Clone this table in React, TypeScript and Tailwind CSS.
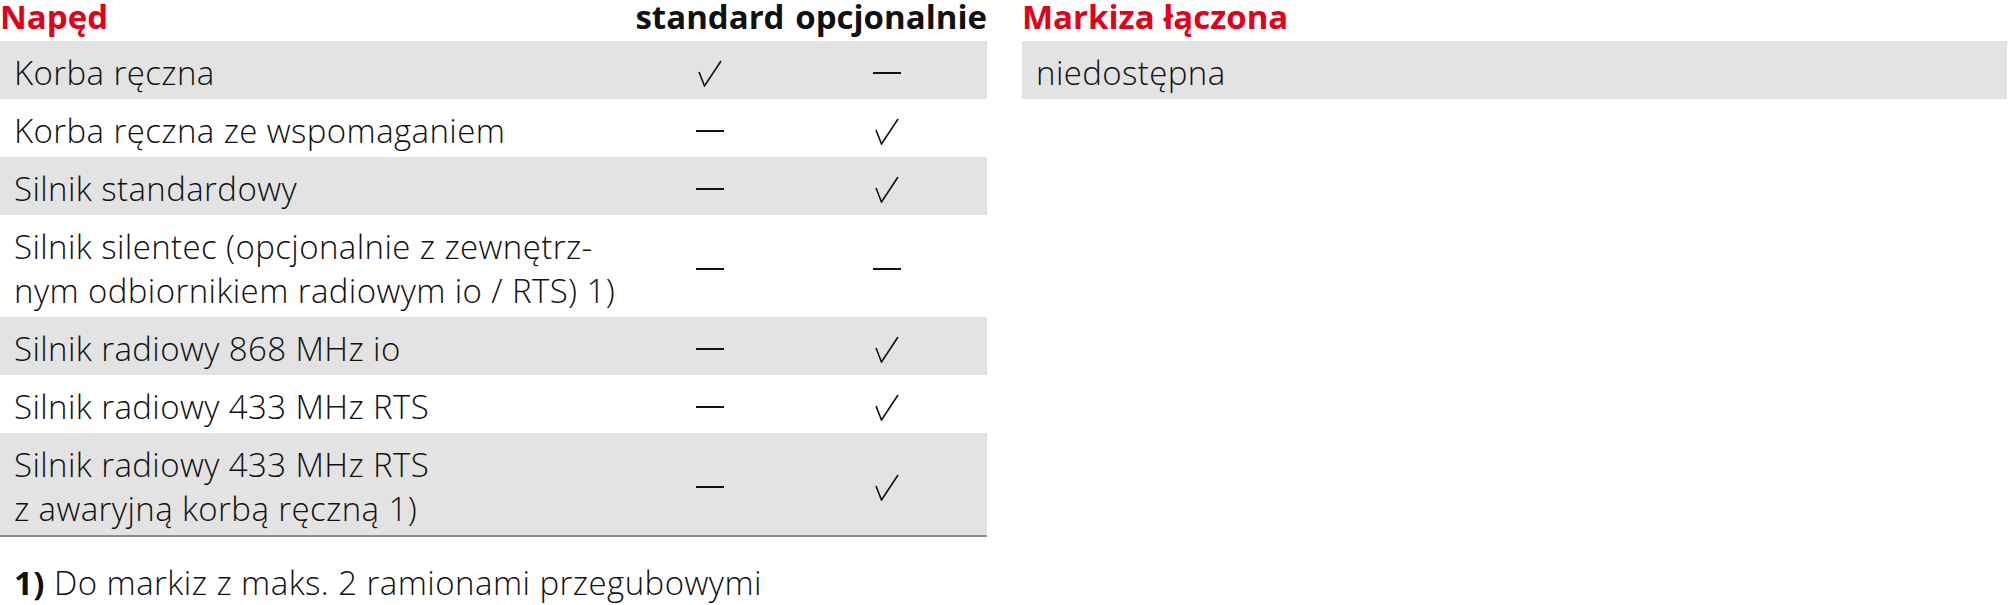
import React from 'react';

type Mark = 'check' | 'dash';

const rows: { label: string[]; std: Mark; opt: Mark }[] = [
  { label: ['Korba ręczna'], std: 'check', opt: 'dash' },
  { label: ['Korba ręczna ze wspomaganiem'], std: 'dash', opt: 'check' },
  { label: ['Silnik standardowy'], std: 'dash', opt: 'check' },
  {
    label: ['Silnik silentec (opcjonalnie z zewnętrz-', 'nym odbiornikiem radiowym io / RTS) 1)'],
    std: 'dash',
    opt: 'dash',
  },
  { label: ['Silnik radiowy 868 MHz io'], std: 'dash', opt: 'check' },
  { label: ['Silnik radiowy 433 MHz RTS'], std: 'dash', opt: 'check' },
  { label: ['Silnik radiowy 433 MHz RTS', 'z awaryjną korbą ręczną 1)'], std: 'dash', opt: 'check' },
];

const Check = () => (
  <svg width="24" height="27" viewBox="0 0 24 27" fill="none" className="block">
    <path d="M1 12 L6.5 26 L23 1" stroke="#111" strokeWidth="1.6" strokeLinejoin="miter" />
  </svg>
);

const Dash = () => <div className="w-[28px] h-[2px] bg-[#111]" />;

const MarkCell = ({ m }: { m: Mark }) => (
  <div className="flex items-center justify-center">{m === 'check' ? <Check /> : <Dash />}</div>
);

export default function App() {
  return (
    <div
      className="w-[2009px] h-[605px] bg-white text-[#111] text-[33px] overflow-hidden"
      style={{ fontFamily: '"Open Sans", "Noto Sans", sans-serif' }}
    >
      <div className="flex gap-[35px]">
        {/* Napęd table */}
        <div className="w-[987px] shrink-0">
          <div className="grid grid-cols-[633px_154px_200px] h-[41px] leading-[33px] font-bold">
            <div className="text-[#e2001a]">Napęd</div>
            <div className="text-center">standard</div>
            <div className="text-right">opcjonalnie</div>
          </div>
          {rows.map((r, i) => (
            <div
              key={i}
              className={`grid grid-cols-[633px_154px_200px] pt-[10px] pb-[4px] leading-[44px] font-light tracking-[0.4px] ${
                i % 2 === 0 ? 'bg-[#e3e3e3]' : 'bg-white'
              }`}
            >
              <div className="pl-[14px]">
                {r.label.map((l, j) => (
                  <div key={j}>{l}</div>
                ))}
              </div>
              <MarkCell m={r.std} />
              <MarkCell m={r.opt} />
            </div>
          ))}
          <div className="h-[2px] bg-[#8c8c8c]" />
        </div>

        {/* Markiza łączona */}
        <div className="flex-1 pr-[2px]">
          <div className="h-[41px] leading-[33px] font-bold text-[#e2001a]">Markiza łączona</div>
          <div className="bg-[#e3e3e3] pt-[10px] pb-[4px] leading-[44px] pl-[14px] font-light tracking-[0.4px]">
            niedostępna
          </div>
        </div>
      </div>

      <div className="mt-[24px] pl-[14px] leading-[44px] font-light tracking-[0.45px]">
        <span className="font-bold">1)</span> Do markiz z maks. 2 ramionami przegubowymi
      </div>
    </div>
  );
}
